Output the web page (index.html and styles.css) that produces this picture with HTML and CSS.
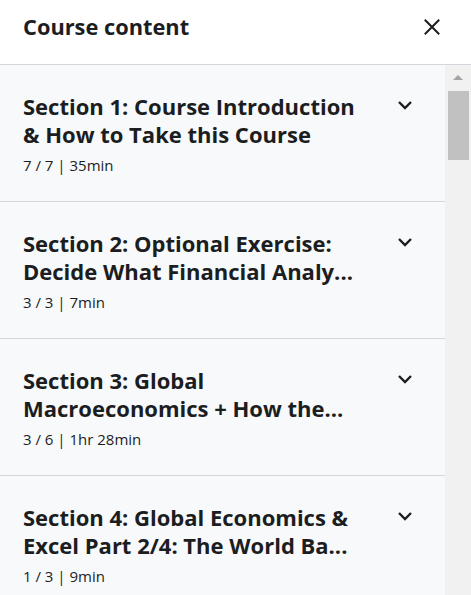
FILE: index.html
```html
<!DOCTYPE html>
<html>
<head>
<meta charset="utf-8">
<link rel="stylesheet" href="styles.css">
</head>
<body>
<div class="panel">
  <header class="head">
    <h2 class="head-title">Course content</h2>
    <button class="close" aria-label="Close">
      <svg width="20" height="20" viewBox="0 0 20 20"><path d="M2 2L18 18M18 2L2 18" stroke="#1c1d1f" stroke-width="2.2" fill="none"/></svg>
    </button>
  </header>
  <div class="body">
    <div class="list">
      <div class="section">
        <div class="sec-text">
          <div class="sec-title"><span>Section 1: Course Introduction</span><span>&amp; How to Take this Course</span></div>
          <div class="sec-meta">7 / 7 | 35min</div>
        </div>
        <svg class="chev" width="16" height="10" viewBox="0 0 16 10"><path d="M2 2L8 8L14 2" stroke="#1c1d1f" stroke-width="2.4" fill="none"/></svg>
      </div>
      <div class="section">
        <div class="sec-text">
          <div class="sec-title"><span>Section 2: Optional Exercise:</span><span>Decide What Financial Analy...</span></div>
          <div class="sec-meta">3 / 3 | 7min</div>
        </div>
        <svg class="chev" width="16" height="10" viewBox="0 0 16 10"><path d="M2 2L8 8L14 2" stroke="#1c1d1f" stroke-width="2.4" fill="none"/></svg>
      </div>
      <div class="section">
        <div class="sec-text">
          <div class="sec-title"><span>Section 3: Global</span><span>Macroeconomics + How the...</span></div>
          <div class="sec-meta">3 / 6 | 1hr 28min</div>
        </div>
        <svg class="chev" width="16" height="10" viewBox="0 0 16 10"><path d="M2 2L8 8L14 2" stroke="#1c1d1f" stroke-width="2.4" fill="none"/></svg>
      </div>
      <div class="section">
        <div class="sec-text">
          <div class="sec-title"><span>Section 4: Global Economics &amp;</span><span>Excel Part 2/4: The World Ba...</span></div>
          <div class="sec-meta">1 / 3 | 9min</div>
        </div>
        <svg class="chev" width="16" height="10" viewBox="0 0 16 10"><path d="M2 2L8 8L14 2" stroke="#1c1d1f" stroke-width="2.4" fill="none"/></svg>
      </div>
    </div>
    <div class="scrollbar">
      <div class="sb-up"></div>
      <div class="sb-thumb"></div>
    </div>
  </div>
</div>
</body>
</html>
```
FILE: styles.css
```css
* { box-sizing: border-box; }
html, body { margin: 0; padding: 0; }
body {
  width: 471px;
  height: 595px;
  overflow: hidden;
  background: #fff;
  font-family: "Open Sans", "Noto Sans", sans-serif;
  color: #1c1d1f;
}
.panel { display: flex; flex-direction: column; height: 595px; }
.head {
  height: 65px;
  flex: none;
  display: flex;
  align-items: center;
  justify-content: space-between;
  padding: 0 30px 11px 23px;
  border-bottom: 1px solid #d1d7dc;
}
.head-title {
  margin: 0;
  font-size: 21.8px;
  font-weight: 700;
  letter-spacing: 0;
}
.close {
  border: 0;
  background: none;
  padding: 0;
  width: 18px;
  height: 18px;
  display: flex;
  margin-top: 1px;
}
.close svg { width: 18px; height: 18px; }
.body { flex: 1; display: flex; min-height: 0; }
.list { flex: 1; background: #f7f9fa; overflow: hidden; }
.section {
  display: flex;
  align-items: flex-start;
  justify-content: space-between;
  padding: 27px 32px 26px 23px;
  border-bottom: 1px solid #d1d7dc;
  height: 137px;
}
.sec-title {
  font-size: 22px;
  font-weight: 700;
  line-height: 28px;
  letter-spacing: 0;
}
.sec-title span { display: block; white-space: nowrap; }
.sec-meta {
  margin-top: 6px;
  font-size: 15px;
  line-height: 22px;
  color: #1c1d1f;
}
.chev { margin-top: 8px; flex: none; }
.scrollbar {
  width: 26px;
  flex: none;
  background: #f1f1f1;
  display: flex;
  flex-direction: column;
  align-items: center;
  padding-top: 10px;
}
.sb-up {
  width: 0; height: 0;
  border-left: 5px solid transparent;
  border-right: 5px solid transparent;
  border-bottom: 5px solid #a3a3a3;
}
.sb-thumb {
  margin-top: 11px;
  width: 21px;
  height: 69px;
  background: #c1c1c1;
}
```
